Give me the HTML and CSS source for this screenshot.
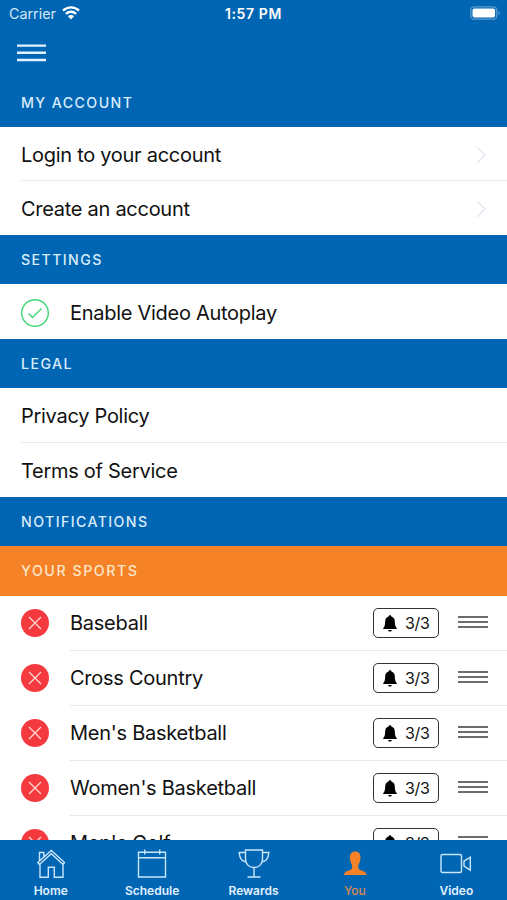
FILE: index.html
```html
<!DOCTYPE html>
<html lang="en">
<head>
    <meta charset="UTF-8">
    <meta name="viewport" content="width=device-width, initial-scale=1.0">
    <title>You</title>
    <link rel="stylesheet" href="styles.css">
</head>
<body>
    <svg width="0" height="0" class="defs">
        <symbol id="chevron" viewBox="0 0 10 18"><path d="M1 1l8 8-8 8"/></symbol>
        <symbol id="remove" viewBox="0 0 28 28"><circle cx="14" cy="14" r="14" stroke="none"/><path d="M8 8l12 12M20 8L8 20"/></symbol>
        <symbol id="bell" viewBox="0 0 14 17"><path d="M7 .3c.9 0 1.300.500 1.400 1.200 2.200.700 3.300 2.400 3.400 4.700.100 3.800.600 5.500 2 7.100v.8H.2v-.8c1.400-1.600 1.900-3.300 2-7.100.100-2.300 1.200-4 3.400-4.700C5.700.8 6.100.3 7 .3zM5.200 14.900h3.600c-.1 1-.8 1.600-1.800 1.600s-1.700-.6-1.800-1.600z"/></symbol>
        <symbol id="drag" viewBox="0 0 30 12"><path d="M0 1h30M0 6h30M0 11h30"/></symbol>
    </svg>

    <header>
        <div class="status">
            <span class="carrier">Carrier</span>
            <svg class="wifi" width="18" height="14" viewBox="0 0 18 14"><path d="M1 4.600a11.600 11.600 0 0 1 16 0M3.900 7.800a7.400 7.400 0 0 1 10.200 0"/><path class="dot" d="M9 13.400L5.900 10.300a4.400 4.400 0 0 1 6.200 0z"/></svg>
            <span class="time">1:57 PM</span>
            <svg class="battery" width="31" height="14" viewBox="0 0 31 14"><rect class="shell" x=".8" y=".8" width="26" height="12.400" rx="3.500"/><rect x="2.500" y="2.500" width="22.600" height="9" rx="2"/><path class="shell-tip" d="M28.500 4.800c1.900.8 1.900 3.600 0 4.400z"/></svg>
        </div>
        <svg class="menu" width="29" height="18" viewBox="0 0 29 18"><path d="M0 1.600h29M0 8.700h29M0 16h29"/></svg>
    </header>

    <main>
        <h3>My Account</h3>
        <div class="row line"><span>Login to your account</span><svg class="chevron"><use href="#chevron"/></svg></div>
        <div class="row"><span>Create an account</span><svg class="chevron"><use href="#chevron"/></svg></div>

        <h3>Settings</h3>
        <div class="row setting">
            <svg class="check" viewBox="0 0 28 28"><circle cx="14" cy="14" r="13.300"/><path d="M7.500 14.500l4 4 9-9"/></svg>
            <span>Enable Video Autoplay</span>
        </div>

        <h3>Legal</h3>
        <div class="row line"><span>Privacy Policy</span></div>
        <div class="row"><span>Terms of Service</span></div>

        <h3>Notifications</h3>
        <h3 class="orange">Your Sports</h3>
        <div class="sport">
            <svg class="remove"><use href="#remove"/></svg>
            <div class="sport-info">
                <span>Baseball</span>
                <div class="alerts"><svg><use href="#bell"/></svg>3/3</div>
                <svg class="drag"><use href="#drag"/></svg>
            </div>
        </div>
        <div class="sport">
            <svg class="remove"><use href="#remove"/></svg>
            <div class="sport-info">
                <span>Cross Country</span>
                <div class="alerts"><svg><use href="#bell"/></svg>3/3</div>
                <svg class="drag"><use href="#drag"/></svg>
            </div>
        </div>
        <div class="sport">
            <svg class="remove"><use href="#remove"/></svg>
            <div class="sport-info">
                <span>Men's Basketball</span>
                <div class="alerts"><svg><use href="#bell"/></svg>3/3</div>
                <svg class="drag"><use href="#drag"/></svg>
            </div>
        </div>
        <div class="sport">
            <svg class="remove"><use href="#remove"/></svg>
            <div class="sport-info">
                <span>Women's Basketball</span>
                <div class="alerts"><svg><use href="#bell"/></svg>3/3</div>
                <svg class="drag"><use href="#drag"/></svg>
            </div>
        </div>
        <div class="sport">
            <svg class="remove"><use href="#remove"/></svg>
            <div class="sport-info">
                <span>Men's Golf</span>
                <div class="alerts"><svg><use href="#bell"/></svg>3/3</div>
                <svg class="drag"><use href="#drag"/></svg>
            </div>
        </div>
    </main>

    <nav>
        <div class="tab">
            <svg viewBox="0 0 32 32"><path d="M5 16.500v12.700h8.300v-10h6v10H28V16.500M2.800 14.500L16.300 2.500l13.200 12-1.500 1.900L16.300 5.800 4.400 16.400zM4.500 13V4.500h4.300v4.700"/></svg>
            <span>Home</span>
        </div>
        <div class="tab">
            <svg viewBox="0 0 32 32"><path d="M2.500 4.200h27v24.800h-27zM2.500 9.800h27M8.700 1.500v5M23.700 1.500v5"/></svg>
            <span>Schedule</span>
        </div>
        <div class="tab">
            <svg viewBox="0 0 32 32"><path d="M7.500 2h17v9c0 5-3.500 8.500-8.500 8.500S7.500 16 7.500 11zM7.500 4.500H1.200c.3 5.500 2.300 9 7.300 9.500M24.500 4.500h6.300c-.3 5.500-2.300 9-7.300 9.500M16 19.500v9M9.500 29h13"/></svg>
            <span>Rewards</span>
        </div>
        <div class="tab active">
            <svg viewBox="0 0 32 32"><path d="M16.200 3.500c3.700 0 5.500 2.500 5.300 6.500-.1 2.800-1 5.200-2.100 6.800-.4 3-.1 4.400 1.800 5.200 3.200 1.200 6 1.600 6.300 5.100H4.900c.3-3.500 3.100-3.900 6.300-5.100 1.900-.8 2.200-2.200 1.800-5.200-1.100-1.600-2-4-2.100-6.800C10.700 6 12.500 3.500 16.200 3.500z"/></svg>
            <span>You</span>
        </div>
        <div class="tab">
            <svg viewBox="0 0 32 32"><rect x="1" y="6.500" width="20.500" height="18" rx="1.500"/><path d="M24 13.200l6.300-4v13l-6.300-4z"/></svg>
            <span>Video</span>
        </div>
    </nav>
</body>
</html>
```

FILE: styles.css
```css
* {
    box-sizing: border-box;
}
body {
    margin: 0;
    height: 100vh;
    display: flex;
    flex-direction: column;
    overflow: hidden;
    background: white;
    color: #111;
    font-family: Inter, "Liberation Sans", sans-serif;
}
svg {
    fill: none;
    flex-shrink: 0;
}
.defs {
    position: absolute;
}
header {
    height: 78px;
    flex-shrink: 0;
    background: #0065b3;
    color: white;
}
.status {
    height: 27px;
    padding: 0 7px 0 9px;
    display: grid;
    grid-template-columns: 53px 163px auto 1fr;
    align-items: center;
}
.carrier {
    font-size: 14.3px;
    color: #d5e6f4;
}
.wifi {
    margin-top: -2px;
}
.wifi path {
    stroke: white;
    stroke-width: 2.3;
}
.wifi .dot {
    fill: white;
    stroke: none;
}
.time {
    font-size: 14px;
    font-weight: 600;
    letter-spacing: 0.6px;
}
.battery {
    justify-self: end;
    margin: -1px -1px 0 0;
    fill: white;
}
.battery .shell {
    fill: none;
    stroke: #5c9ccf;
    stroke-width: 1.3;
}
.battery .shell-tip {
    fill: #5c9ccf;
}
.menu {
    display: block;
    margin: 17px 0 0 17px;
    stroke: #e4f3ff;
    stroke-width: 2.4;
}
main {
    flex: 1;
    min-height: 0;
    overflow: hidden;
}
h3 {
    margin: 0;
    height: 49px;
    padding-left: 21px;
    line-height: 49px;
    background: #0065b3;
    color: #d9edfc;
    font-size: 14.2px;
    font-weight: 500;
    letter-spacing: 1.4px;
    text-transform: uppercase;
}
.orange {
    height: 50px;
    line-height: 50px;
    background: #f58226;
    color: #fee6cb;
    letter-spacing: 1.55px;
}
.row {
    display: flex;
    align-items: center;
    height: 54.2px;
    margin-left: 21px;
    padding: 2px 21px 0 0;
    font-size: 20px;
    letter-spacing: -0.28px;
}
.line {
    border-bottom: 1px solid #e9e9eb;
}
.setting {
    height: 55px;
    gap: 21px;
}
.chevron {
    width: 10px;
    height: 18px;
    margin-left: auto;
    stroke: #e4e4f3;
    stroke-width: 1.3;
}
.check {
    width: 28px;
    height: 28px;
    stroke: #3fd673;
    stroke-width: 1.4;
}
.sport {
    display: flex;
    align-items: center;
    height: 55px;
    padding-left: 21px;
    font-size: 20px;
    letter-spacing: -0.26px;
}
.remove {
    width: 28px;
    height: 28px;
    margin-right: 21px;
    fill: #f43a3f;
    stroke: #ffd9d6;
    stroke-width: 1.3;
}
.sport-info {
    flex: 1;
    display: flex;
    align-items: center;
    height: 100%;
    padding: 1px 19px 0 0;
    border-bottom: 1px solid #e9e9eb;
}
.alerts {
    display: flex;
    align-items: center;
    width: 66px;
    height: 30px;
    margin-left: auto;
    padding-left: 9px;
    gap: 8px;
    border: 1.5px solid #333;
    border-radius: 5px;
    font-size: 16px;
    letter-spacing: -0.3px;
}
.alerts svg {
    width: 14px;
    height: 17px;
    fill: black;
}
.drag {
    width: 30px;
    height: 12px;
    margin: 0 0 2px 19px;
    stroke: #3d3d3d;
    stroke-width: 1.7;
}
nav {
    display: flex;
    height: 60px;
    flex-shrink: 0;
    background: #0065b3;
    color: #e0f1ff;
}
.tab {
    flex: 1;
    display: flex;
    flex-direction: column;
    align-items: center;
    padding-top: 7.5px;
    font-size: 12px;
    font-weight: 600;
    line-height: 14px;
    gap: 4.5px;
}
.tab svg {
    width: 32px;
    height: 32px;
    stroke: #c9e6fb;
    stroke-width: 1.4;
}
.active {
    color: #d98b50;
    font-weight: 500;
}
.tab.active svg {
    fill: #f58226;
    stroke: none;
}
```
